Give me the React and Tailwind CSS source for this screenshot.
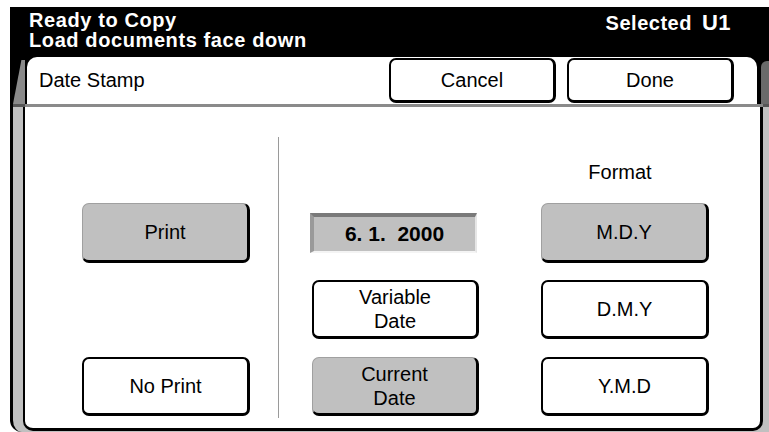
import React from "react";

const whiteBtn =
  "flex items-center justify-center text-center rounded-[7px] bg-white border-t-2 border-l-2 border-r-[3px] border-b-[3px] border-black text-[20px] leading-[24px] text-black";
const grayBtn =
  "flex items-center justify-center text-center rounded-[7px] bg-[#c0c0c0] border-t border-l border-t-[#a0a0a0] border-l-[#a0a0a0] border-r-[3px] border-b-[3px] border-r-black border-b-black text-[20px] leading-[24px] text-black";

export default function App() {
  return (
    <div className="w-[769px] h-[432px] bg-white overflow-hidden pt-[7px] pl-[10px] font-['Liberation_Sans',Arial,sans-serif] flex flex-col">
      {/* Header */}
      <div className="h-[50px] shrink-0 bg-black text-white flex justify-between">
        <div className="pl-[19px] pt-[3px] font-bold text-[20px] leading-[20px] tracking-[0.6px]">
          <div>Ready to Copy</div>
          <div>Load documents face down</div>
        </div>
        <div className="pr-[38px] pt-[5px] font-bold text-[20px] leading-[22px] tracking-[0.5px] flex items-baseline">
          <span>Selected</span>
          <span className="ml-[10px] text-[22px]">U1</span>
        </div>
      </div>

      {/* Title row */}
      <div className="h-[47px] shrink-0 flex bg-black">
        <div className="w-[17px] flex">
          <div className="mt-[3px] ml-[3px] w-[12px] h-[44px] bg-[#8a8a8a] [clip-path:polygon(70%_0,100%_0,100%_100%,0_100%)]" />
        </div>
        <div className="w-[730px] bg-white rounded-t-[10px] flex items-start pt-[1px] pl-[12px] pr-[23px]">
          <div className="text-[20px] leading-[44px] text-black flex-1">Date Stamp</div>
          <div className={`${whiteBtn} w-[167px] h-[45px]`}>Cancel</div>
          <div className={`${whiteBtn} w-[167px] h-[45px] ml-[11px]`}>Done</div>
        </div>
        <div className="w-[12px] flex">
          <div className="mt-[4px] ml-[4px] flex-1 bg-[#6a6a6a] rounded-tl-[6px]" />
        </div>
      </div>

      {/* Separator line */}
      <div className="h-[3px] shrink-0 flex">
        <div className="w-[3px] bg-black" />
        <div className="w-[12px] bg-[#555]" />
        <div className="flex-1 bg-[#8a8a8a]" />
        <div className="w-[6px] bg-[#555]" />
      </div>

      {/* Body */}
      <div className="flex-1 flex border-l-[3px] border-black bg-[#c0c0c0] rounded-bl-[12px]">
        <div className="ml-[10px] w-[740px] h-[324px] bg-white border-l-2 border-r-[3px] border-b-[3px] border-black rounded-b-[10px] flex">
          {/* Left column */}
          <div className="w-[253px] pl-[57px] flex flex-col">
            <div className={`${grayBtn} w-[168px] h-[60px] mt-[96px]`}>Print</div>
            <div className={`${whiteBtn} w-[168px] h-[59px] mt-[94px]`}>No Print</div>
          </div>

          {/* Divider */}
          <div className="w-px h-[281px] mt-[30px] bg-[#9a9a9a]" />

          {/* Middle column */}
          <div className="ml-[31px] w-[169px] flex flex-col">
            <div className="mt-[106px] w-[167px] h-[40px] bg-[#c0c0c0] border-t-[4px] border-t-[#7a7a7a] border-l-[4px] border-l-[#9a9a9a] border-r-2 border-r-[#e6e6e6] border-b-2 border-b-[#f4f4f4] flex items-center justify-center font-bold text-[21px] text-black">
              6.&nbsp;1.&nbsp;&nbsp;2000
            </div>
            <div className={`${whiteBtn} ml-[2px] w-[167px] h-[59px] mt-[27px]`}>
              Variable
              <br />
              Date
            </div>
            <div className={`${grayBtn} ml-[2px] w-[167px] h-[59px] mt-[18px]`}>
              Current
              <br />
              Date
            </div>
          </div>

          {/* Right column */}
          <div className="ml-[62px] w-[168px] flex flex-col">
            <div className="mt-[53px] h-[24px] pr-[10px] text-center text-[20px] leading-[24px] text-black">Format</div>
            <div className={`${grayBtn} w-[168px] h-[60px] mt-[19px]`}>M.D.Y</div>
            <div className={`${whiteBtn} w-[168px] h-[59px] mt-[17px]`}>D.M.Y</div>
            <div className={`${whiteBtn} w-[168px] h-[59px] mt-[18px]`}>Y.M.D</div>
          </div>
        </div>
      </div>
    </div>
  );
}
